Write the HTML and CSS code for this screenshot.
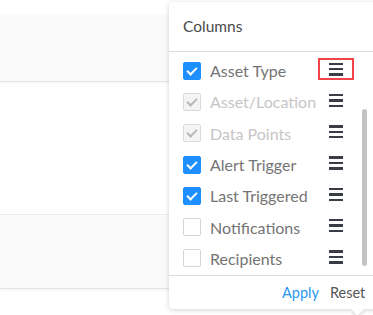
FILE: index.html
```html
<!DOCTYPE html>
<html lang="en">
<head>
    <meta charset="UTF-8">
    <meta name="viewport" content="width=device-width, initial-scale=1.0">
    <title>Columns</title>
    <link rel="stylesheet" href="styles.css">
</head>
<body>
    <div class="page">
        <div class="band band-top"></div>
        <div class="band band-bottom"></div>
    </div>

    <div class="popup">
        <div class="popup-head">Columns</div>
        <div class="popup-body">
            <ul class="col-list">
                <li class="col-item">
                    <span class="box checked"></span>
                    <span class="col-name">Asset Type</span>
                    <span class="handle active"><i></i><i></i><i></i></span>
                </li>
                <li class="col-item disabled">
                    <span class="box checked"></span>
                    <span class="col-name">Asset/Location</span>
                    <span class="handle"><i></i><i></i><i></i></span>
                </li>
                <li class="col-item disabled">
                    <span class="box checked"></span>
                    <span class="col-name">Data Points</span>
                    <span class="handle"><i></i><i></i><i></i></span>
                </li>
                <li class="col-item">
                    <span class="box checked"></span>
                    <span class="col-name">Alert Trigger</span>
                    <span class="handle"><i></i><i></i><i></i></span>
                </li>
                <li class="col-item">
                    <span class="box checked"></span>
                    <span class="col-name">Last Triggered</span>
                    <span class="handle"><i></i><i></i><i></i></span>
                </li>
                <li class="col-item">
                    <span class="box"></span>
                    <span class="col-name">Notifications</span>
                    <span class="handle"><i></i><i></i><i></i></span>
                </li>
                <li class="col-item">
                    <span class="box"></span>
                    <span class="col-name">Recipients</span>
                    <span class="handle"><i></i><i></i><i></i></span>
                </li>
            </ul>
            <div class="scrollbar"></div>
        </div>
        <div class="popup-foot">
            <a class="btn-apply">Apply</a>
            <a class="btn-reset">Reset</a>
        </div>
        <div class="caret"></div>
    </div>
</body>
</html>
```

FILE: styles.css
```css
body {
    margin: 0;
    background: #fff;
    font-family: Lato, "Open Sans", sans-serif;
    overflow: hidden;
}

.page {
    height: 315px;
    padding-top: 15px;
    box-sizing: border-box;
}

.band {
    background: #fafafa;
    border-bottom: 1px solid #e6e6ea;
    box-shadow: 0 1px 3px rgba(0, 0, 0, 0.06);
}

.band-top {
    height: 66px;
}

.band-bottom {
    height: 73px;
    margin-top: 132px;
    border-top: 1px solid #ebebf0;
}

/* floating column chooser */
.popup {
    position: absolute;
    left: 169px;
    top: 2px;
    width: 214px;
    height: 307px;
    background: #fff;
    border-radius: 4px;
    box-shadow: 0 1px 5px rgba(0, 0, 0, 0.18);
    display: flex;
    flex-direction: column;
}

.popup-head {
    height: 49px;
    padding-left: 14px;
    line-height: 48px;
    font-size: 15.5px;
    color: #4a4a4a;
    border-bottom: 1px solid #dcdcdc;
}

.popup-body {
    position: relative;
    flex: 1;
}

.col-list {
    list-style: none;
    margin: 0;
    padding: 3px 0 0 14px;
}

.col-item {
    display: flex;
    align-items: center;
    height: 31.3px;
}

.box {
    width: 16px;
    height: 16px;
    border: 1px solid #d6d6d6;
    border-radius: 2px;
    box-sizing: content-box;
    position: relative;
    flex: none;
}

.box.checked {
    background: #1e8fff;
    border-color: #1e8fff;
}

.box.checked::after {
    content: "";
    position: absolute;
    left: 5px;
    top: 2px;
    width: 4px;
    height: 8px;
    border: solid #fff;
    border-width: 0 2px 2px 0;
    transform: rotate(45deg);
}

.disabled .box.checked {
    background: #f4f4f4;
    border-color: #dadada;
}

.disabled .box.checked::after {
    border-color: #b9b9b9;
}

.col-name {
    margin-left: 9px;
    font-size: 16px;
    color: #747474;
    width: 108px;
    white-space: nowrap;
}

.disabled .col-name {
    color: #c6c6c6;
}

.handle {
    display: flex;
    flex-direction: column;
    gap: 3px;
    padding: 2.5px 9px;
    margin-top: -3px;
    border: 2px solid transparent;
}

.handle i {
    display: block;
    width: 14px;
    height: 2.4px;
    background: #3a3d45;
}

.handle.active {
    border-color: #f0434a;
}

.scrollbar {
    position: absolute;
    right: 16px;
    top: 57px;
    width: 5px;
    height: 157px;
    border-radius: 3px;
    background: #c3c3c6;
}

.popup-foot {
    height: 33px;
    border-top: 1px solid #dcdcdc;
    display: flex;
    align-items: center;
    padding-left: 113px;
    font-size: 14.5px;
}

.btn-apply {
    color: #2a97f5;
}

.btn-reset {
    color: #555;
    margin-left: 11px;
}

.caret {
    position: absolute;
    left: 184px;
    bottom: -5px;
    width: 9px;
    height: 9px;
    background: #fff;
    transform: rotate(45deg);
    box-shadow: 2px 2px 3px rgba(0, 0, 0, 0.12);
}
```
